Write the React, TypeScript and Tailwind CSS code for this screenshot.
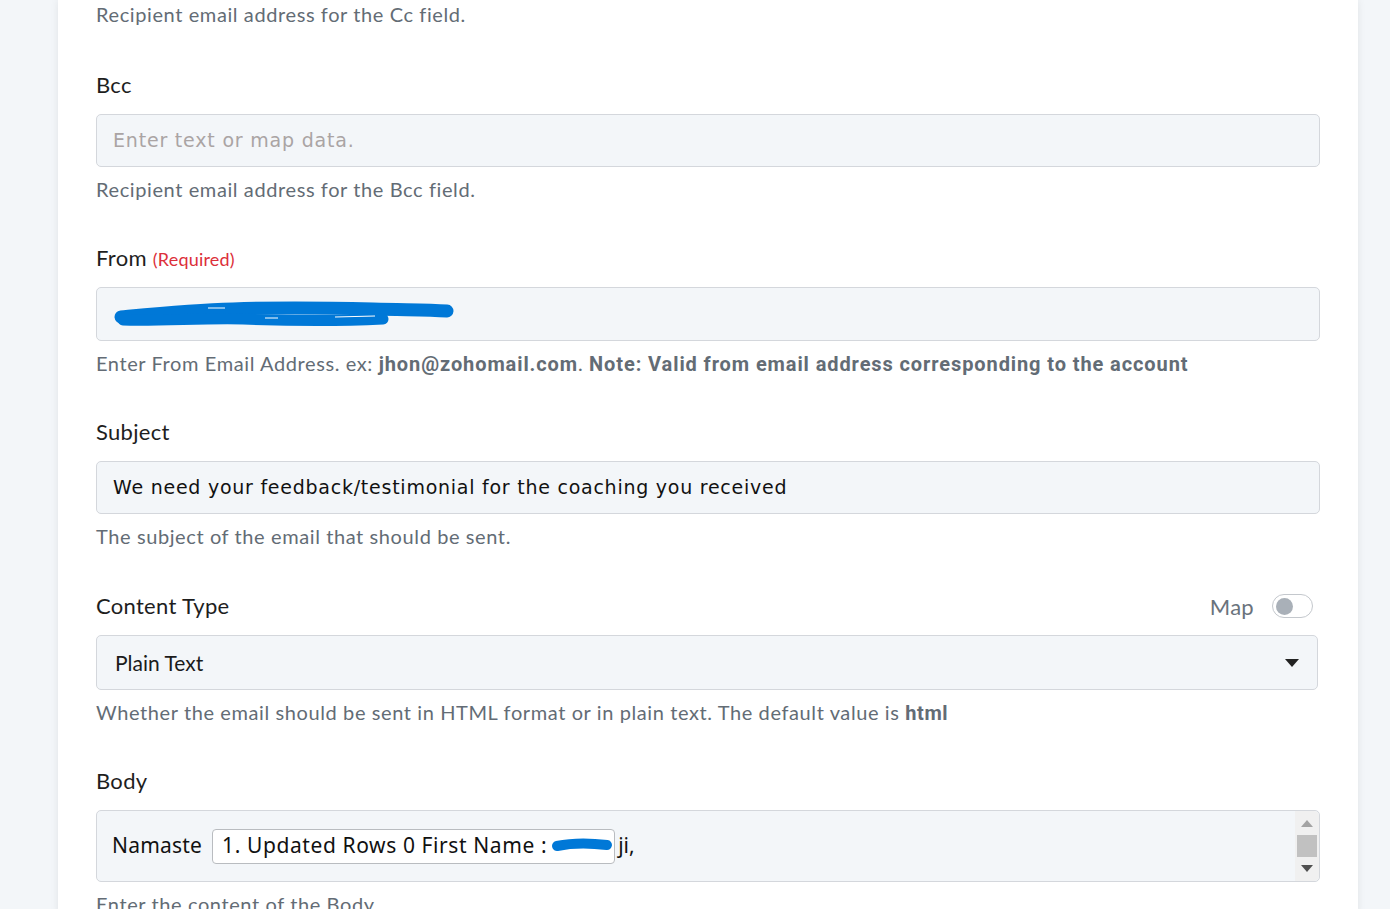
import React from "react";

const labelFont = { fontFamily: "Lato, 'Noto Sans', sans-serif" };
const boldFont = { fontFamily: "Roboto, sans-serif" };

function Field({
  label,
  required,
  help,
  right,
  last,
  children,
}: {
  label: string;
  required?: boolean;
  help: React.ReactNode;
  right?: React.ReactNode;
  last?: boolean;
  children: React.ReactNode;
}) {
  return (
    <div className={last ? "mb-[44px]" : "mb-[43px]"}>
      <div className="flex items-center justify-between h-[28px] mb-[15px]">
        <div
          className="text-[22px] leading-[28px] tracking-[0.3px] text-[#1e1e1e]"
          style={labelFont}
        >
          {label}
          {required && (
            <span className="ml-[6px] text-[18px] tracking-[0.2px] text-[#dc2f3a]">
              (Required)
            </span>
          )}
        </div>
        {right}
      </div>
      {children}
      <div
        className="mt-[10px] h-[24px] leading-[24px] text-[20px] text-[#636c75] tracking-[0.6px] whitespace-nowrap"
        style={labelFont}
      >
        {help}
      </div>
    </div>
  );
}

function Redacted() {
  return (
    <svg width="345" height="32" viewBox="0 0 345 32" className="block">
      <path
        d="M8 19 C40 16 80 12 120 11 C170 9 220 10 260 11 C300 12 315 12 334 13"
        stroke="#0078d7"
        strokeWidth="13"
        strokeLinecap="round"
        fill="none"
      />
      <path
        d="M10 22 C50 23 90 20 130 21 C180 23 230 23 270 21"
        stroke="#0078d7"
        strokeWidth="11"
        strokeLinecap="round"
        fill="none"
      />
      <path
        d="M95 10 L112 10 M152 20 L165 20 M222 19 L262 18"
        stroke="#ffffff"
        strokeWidth="1"
      />
    </svg>
  );
}

export default function App() {
  const inputCls =
    "h-[53px] w-full rounded-[5px] border border-[#d4d7dc] bg-[#f3f6f9] flex items-center px-[16px]";
  const inputFont = { fontFamily: "'DejaVu Sans', Verdana, sans-serif" };

  return (
    <div className="min-h-[909px] w-full bg-[#f3f6f9] overflow-hidden">
      <div className="ml-[58px] w-[1300px] min-h-[909px] bg-white shadow-[0_0_8px_rgba(0,0,0,0.08)] px-[38px] pt-[2px]">
        <div
          className="h-[24px] leading-[24px] text-[20px] text-[#636c75] tracking-[0.6px] mb-[45px]"
          style={labelFont}
        >
          Recipient email address for the Cc field.
        </div>

        <Field label="Bcc" help="Recipient email address for the Bcc field.">
          <div className={inputCls}>
            <span
              className="text-[19px] text-[#aaa4a4] tracking-[0.8px]"
              style={inputFont}
            >
              Enter text or map data.
            </span>
          </div>
        </Field>

        <Field
          label="From"
          required
          help={
            <>
              Enter From Email Address. ex:{" "}
              <b className="font-bold tracking-[0.9px]" style={boldFont}>
                jhon@zohomail.com
              </b>
              .{" "}
              <b className="font-bold tracking-[0.9px]" style={boldFont}>
                Note: Valid from email address corresponding to the account
              </b>
            </>
          }
        >
          <div className={inputCls + " h-[54px] px-[8px]"}>
            <Redacted />
          </div>
        </Field>

        <Field
          label="Subject"
          last
          help="The subject of the email that should be sent."
        >
          <div className={inputCls}>
            <span
              className="text-[19px] text-[#111] tracking-[0.75px]"
              style={inputFont}
            >
              We need your feedback/testimonial for the coaching you received
            </span>
          </div>
        </Field>

        <Field
          label="Content Type"
          help={
            <>
              Whether the email should be sent in HTML format or in plain text. The default value is{" "}
              <b className="font-bold tracking-[0.6px]" style={boldFont}>
                html
              </b>
            </>
          }
          right={
            <div className="flex items-center gap-[18px] mr-[7px]">
              <span className="text-[22px] tracking-[0.3px] text-[#6a737c]" style={labelFont}>
                Map
              </span>
              <div className="w-[41px] h-[24px] rounded-full border border-[#c4c8cd] bg-white flex items-center px-[3px]">
                <div className="w-[17px] h-[17px] rounded-full bg-[#a9b0b8]" />
              </div>
            </div>
          }
        >
          <div className="h-[55px] w-[1222px] rounded-[5px] border border-[#d4d7dc] bg-[#f3f6f9] flex items-center justify-between pl-[18px] pr-[18px]">
            <span className="text-[21px] text-[#1b1b1b]" style={labelFont}>
              Plain Text
            </span>
            <svg width="14" height="8" viewBox="0 0 14 8">
              <path d="M0 0 L14 0 L7 8 Z" fill="#222" />
            </svg>
          </div>
        </Field>

        <Field label="Body" help="Enter the content of the Body">
          <div className="relative h-[72px] w-full rounded-[5px] border border-[#d4d7dc] bg-[#f3f6f9] flex items-center pl-[15px]">
            <div
              className="flex items-center text-[21px] text-[#111]"
              style={{ fontFamily: "'Noto Sans', 'Open Sans', sans-serif" }}
            >
              <span className="mr-[10px] tracking-[0.2px]">Namaste</span>
              <span className="flex items-center h-[35px] rounded-[4px] border border-[#b9bcc0] bg-white pl-[9px] pr-[1px] tracking-[0.6px]">
                1. Updated Rows 0 First Name :
                <svg width="62" height="20" viewBox="0 0 62 20" className="ml-[4px]">
                  <path
                    d="M6 10 C20 7 40 7 56 9"
                    stroke="#0078d7"
                    strokeWidth="10"
                    strokeLinecap="round"
                    fill="none"
                  />
                </svg>
              </span>
              <span className="ml-[3px]">ji,</span>
            </div>
            <div className="absolute right-0 top-0 bottom-0 w-[24px] bg-[#f0f0f0] rounded-r-[5px] flex flex-col items-center justify-between pt-[9px] pb-[9px]">
              <svg width="12" height="7" viewBox="0 0 12 7">
                <path d="M0 7 L6 0 L12 7 Z" fill="#a3a3a3" />
              </svg>
              <div className="w-[20px] h-[22px] bg-[#c1c1c1]" />
              <svg width="12" height="7" viewBox="0 0 12 7">
                <path d="M0 0 L12 0 L6 7 Z" fill="#505050" />
              </svg>
            </div>
          </div>
        </Field>
      </div>
    </div>
  );
}
